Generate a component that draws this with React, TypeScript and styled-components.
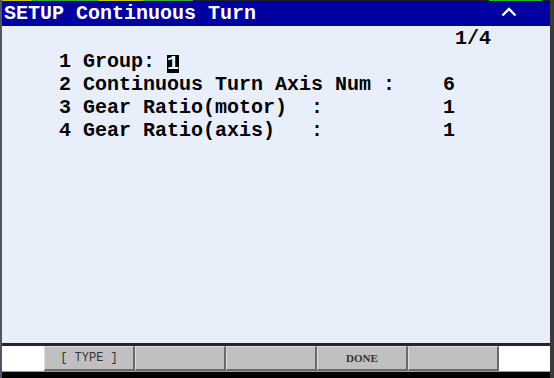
import React from "react";
import styled, { createGlobalStyle } from "styled-components";

const Global = createGlobalStyle`
  html, body { margin: 0; padding: 0; background: #000; }
  body { width: 554px; height: 378px; overflow: hidden; }
`;

const Frame = styled.div`
  width: 554px;
  height: 378px;
  box-sizing: border-box;
  display: flex;
  flex-direction: column;
  border-left: 2px solid #4d5661;
  border-right: 4px solid #3a3a3a;
  background: #e9eefb;
`;

const StatusStrip = styled.div`
  height: 1px;
  display: flex;
  background: #202020;
`;

const StatusSeg = styled.div<{ $w: number; $c: string }>`
  width: ${(p) => p.$w}px;
  background: ${(p) => p.$c};
`;

const TitleBar = styled.div`
  height: 25px;
  background: #0000a0;
  display: flex;
  align-items: center;
  justify-content: space-between;
  padding: 0 33px 0 2px;
  color: #fff;
  font-family: "Liberation Mono", "Courier New", monospace;
  font-weight: bold;
  font-size: 20px;
  line-height: 25px;
  white-space: pre;
`;

const Caret = styled.svg`
  width: 16px;
  height: 10px;
  margin-top: -4px;
`;

const Body = styled.div`
  flex: 1;
  padding: 1px 0 0 57px;
  font-family: "Liberation Mono", "Courier New", monospace;
  font-weight: bold;
  font-size: 20px;
  color: #000;
`;

const Line = styled.div`
  height: 23px;
  line-height: 23px;
  white-space: pre;
`;

const Cursor = styled.span`
  display: inline-block;
  width: 12px;
  height: 18px;
  line-height: 18px;
  background: #000;
  color: #fff;
  vertical-align: -2px;
`;

const Footer = styled.div`
  border-top: 3px solid #262626;
  display: flex;
  flex-direction: column;
`;

const KeyRow = styled.div`
  height: 25px;
  background: #fff;
  display: grid;
  grid-template-columns: repeat(5, 91px);
  padding-left: 42px;
  border-bottom: 1px solid #9a9a9a;
`;

const Key = styled.div<{ $serif?: boolean }>`
  box-sizing: border-box;
  background: #c0c0c0;
  border-top: 1px solid #dcdcdc;
  border-left: 1px solid #dcdcdc;
  border-right: 2px solid #6a6a6a;
  border-bottom: 2px solid #6a6a6a;
  display: flex;
  align-items: center;
  justify-content: center;
  color: #333;
  font-family: ${(p) =>
    p.$serif
      ? `"Liberation Serif", "Times New Roman", serif`
      : `"Liberation Mono", "Courier New", monospace`};
  font-size: ${(p) => (p.$serif ? "11px" : "12px")};
  font-weight: ${(p) => (p.$serif ? 600 : 400)};
  white-space: pre;
`;

const BottomEdge = styled.div`
  height: 6px;
  background: #000;
`;

const segs: [number, string][] = [
  [30, "#c8c800"],
  [66, "#30b030"],
  [45, "#c8c800"],
  [50, "#30b030"],
  [296, "#202020"],
  [53, "#20c020"],
  [8, "#202020"],
];

export default function App() {
  return (
    <>
      <Global />
      <Frame>
        <StatusStrip>
          {segs.map(([w, c], i) => (
            <StatusSeg key={i} $w={w} $c={c} />
          ))}
        </StatusStrip>
        <TitleBar>
          <span>SETUP Continuous Turn</span>
          <Caret viewBox="0 0 16 10">
            <polyline
              points="1.5,8.5 8,2 14.5,8.5"
              fill="none"
              stroke="#fff"
              strokeWidth="2.4"
            />
          </Caret>
        </TitleBar>
        <Body>
          <Line>{"                                 1/4"}</Line>
          <Line>
            {"1 Group: "}
            <Cursor>1</Cursor>
          </Line>
          <Line>{"2 Continuous Turn Axis Num :    6"}</Line>
          <Line>{"3 Gear Ratio(motor)  :          1"}</Line>
          <Line>{"4 Gear Ratio(axis)   :          1"}</Line>
        </Body>
        <Footer>
          <KeyRow>
            <Key>[ TYPE ]</Key>
            <Key />
            <Key />
            <Key $serif>DONE</Key>
            <Key />
          </KeyRow>
          <BottomEdge />
        </Footer>
      </Frame>
    </>
  );
}
